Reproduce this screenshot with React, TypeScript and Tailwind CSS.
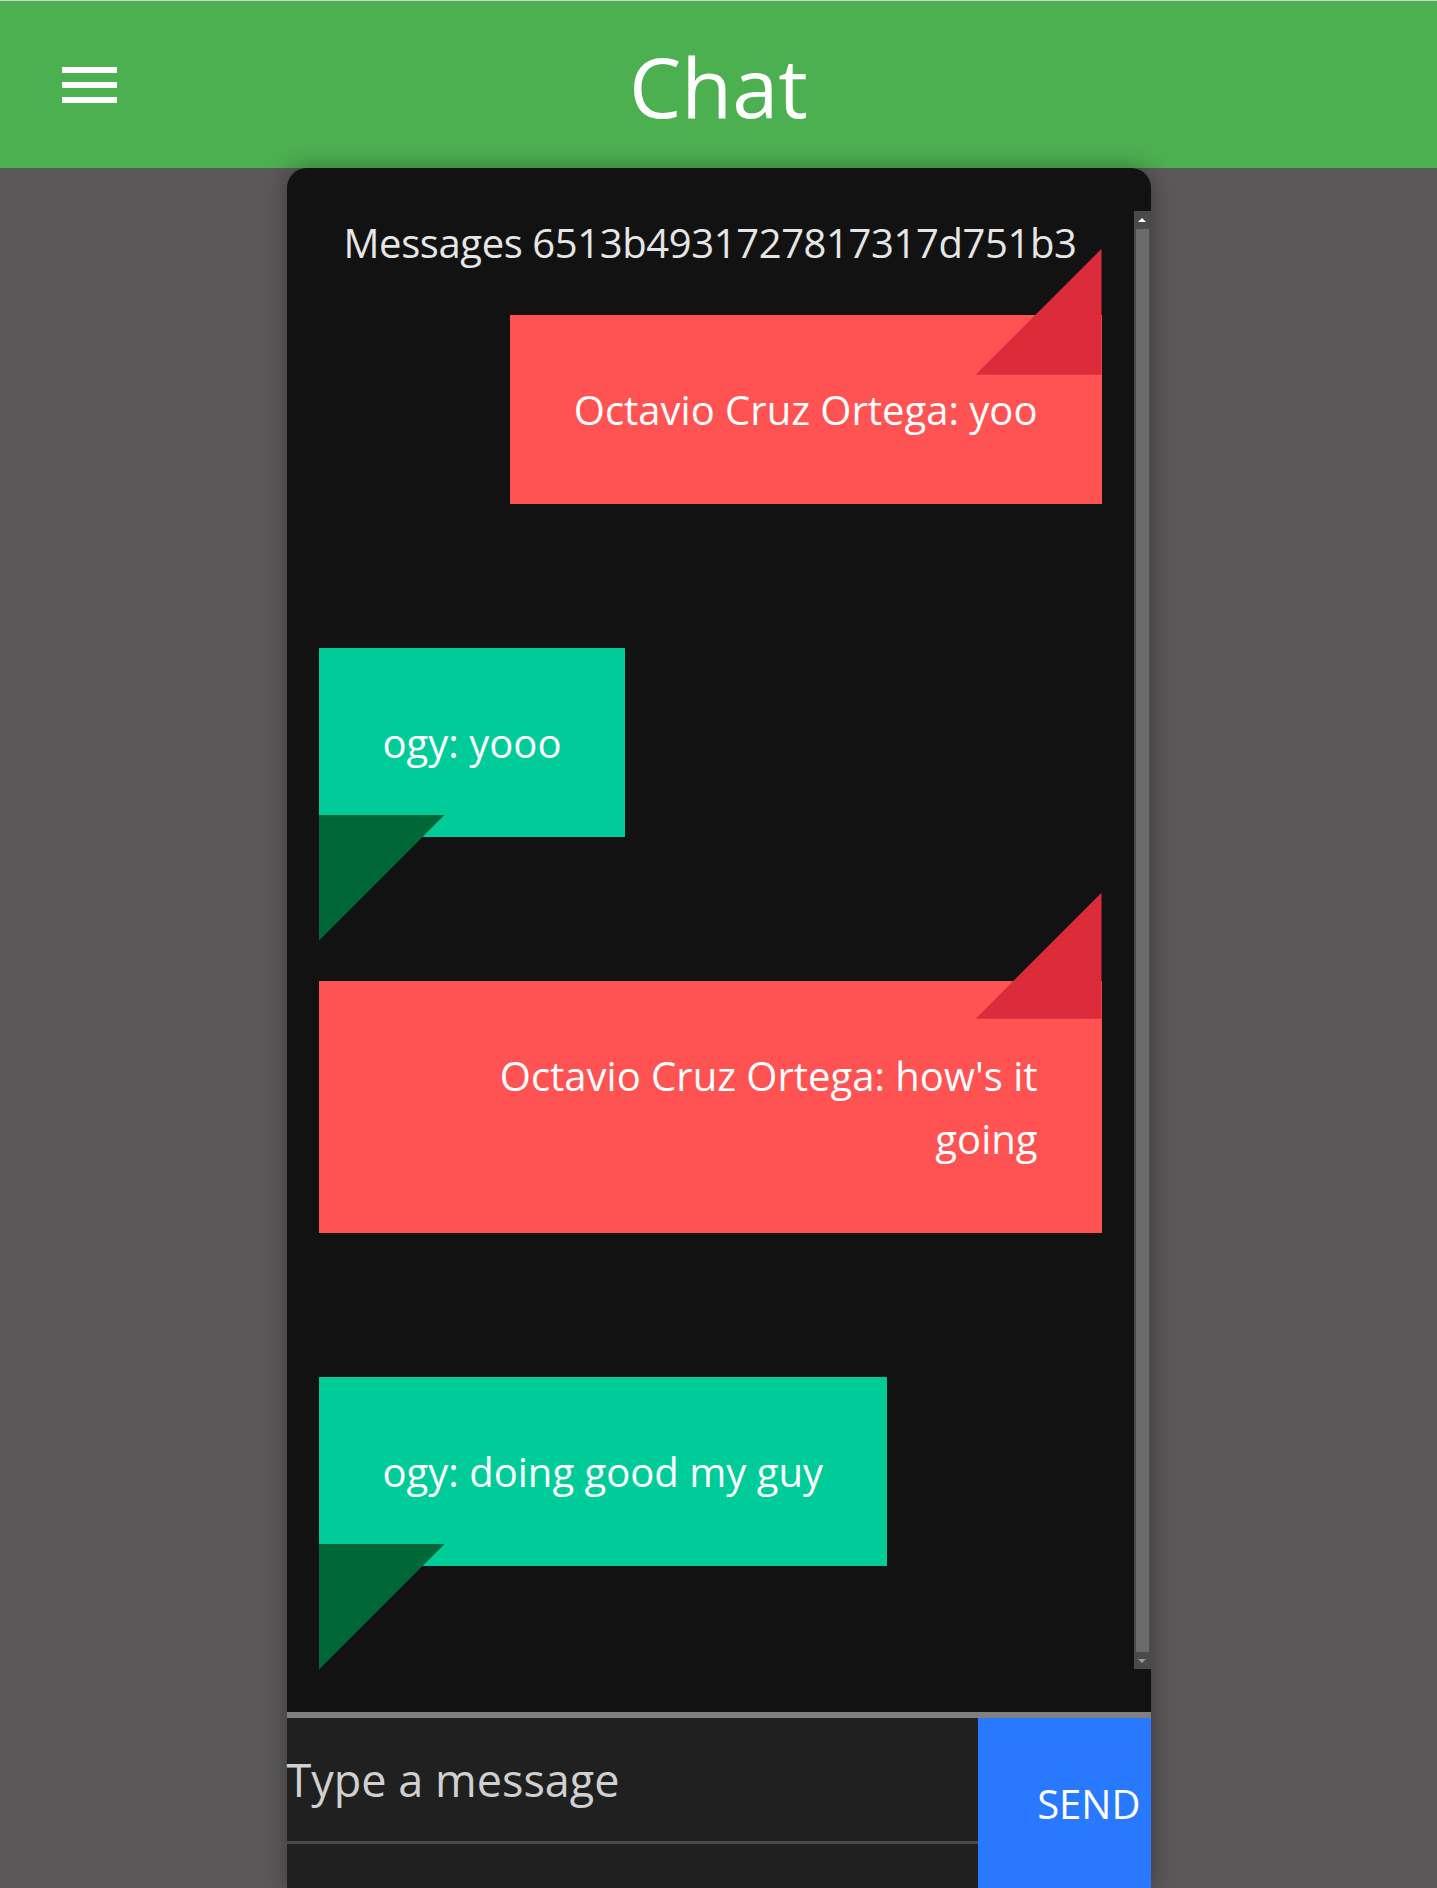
import React from "react";

type Msg = { side: "me" | "them"; lines: string[] };

const messages: Msg[] = [
  { side: "me", lines: ["Octavio Cruz Ortega: yoo"] },
  { side: "them", lines: ["ogy: yooo"] },
  { side: "me", lines: ["Octavio Cruz Ortega: how's it", "going"] },
  { side: "them", lines: ["ogy: doing good my guy"] },
];

function Text({ lines }: { lines: string[] }) {
  return (
    <span>
      {lines.map((l, i) => (
        <React.Fragment key={i}>
          {i > 0 && <br />}
          {l}
        </React.Fragment>
      ))}
    </span>
  );
}

function Bubble({ m }: { m: Msg }) {
  const wide = m.lines.length > 1;
  if (m.side === "me") {
    return (
      <div
        className={
          "relative max-w-[784px] bg-[#ff5252] px-16 py-[63px] text-right text-[40px] leading-[63px] text-white " +
          (wide ? "self-stretch" : "self-end")
        }
      >
        <Text lines={m.lines} />
        <div className="absolute right-0 top-[-35%] h-[126px] w-[126px] bg-[#dc2b3b] [clip-path:polygon(100%_0,100%_100%,0_100%)]" />
      </div>
    );
  }
  return (
    <div
      className={
        "relative max-w-[784px] bg-[#00cc99] px-16 py-[63px] text-left text-[40px] leading-[63px] text-white " +
        (wide ? "self-stretch" : "self-start")
      }
    >
      <Text lines={m.lines} />
      <div className="absolute left-0 bottom-[-55%] h-[126px] w-[126px] bg-[#006837] [clip-path:polygon(0_0,100%_0,0_100%)]" />
    </div>
  );
}

export default function App() {
  return (
    <div className="min-h-screen bg-[#5a5858] font-['Open_Sans',_'Noto_Sans',_sans-serif]">
      <header className="relative flex h-[168px] items-center justify-center border-t border-[#cfcfcf] bg-[#4caf50]">
        <button className="absolute left-[62px] top-[66px] flex w-[55px] flex-col gap-[9px]">
          <span className="block h-[6px] w-full bg-white" />
          <span className="block h-[6px] w-full bg-white" />
          <span className="block h-[6px] w-full bg-white" />
        </button>
        <h1 className="mt-[2px] text-[83px] font-normal leading-none text-white">Chat</h1>
      </header>
      <main className="relative z-10 mx-auto w-[864px] rounded-t-[20px] bg-[#121212] pt-[43px] shadow-[0_0_22px_rgba(0,0,0,0.35)]">
        <div className="flex">
          <div className="flex flex-1 flex-col px-8 pb-[103px]">
            <h2 className="whitespace-nowrap text-center text-[40px] font-normal leading-[63px] tracking-[-0.4px] text-[#e6e6e6]">
              Messages 6513b4931727817317d751b3
            </h2>
            <div className="mt-[41px] flex flex-col gap-[144px]">
              {messages.map((m, i) => (
                <Bubble key={i} m={m} />
              ))}
            </div>
          </div>
          <div className="flex w-[17px] flex-col bg-[#4a4a4a]">
            <div className="flex h-[18px] items-center justify-center">
              <div className="h-0 w-0 border-x-[4px] border-b-[4px] border-x-transparent border-b-white" />
            </div>
            <div className="mx-[2px] flex-1 bg-[#6b6b6b]" />
            <div className="flex h-[17px] items-center justify-center">
              <div className="h-0 w-0 border-x-[4px] border-t-[4px] border-x-transparent border-t-[#9a9a9a]" />
            </div>
          </div>
        </div>
        <div className="h-[43px]" />
        <div className="h-[6px] bg-[#808080]" />
        <div className="flex h-[172px]">
          <div className="flex-1 bg-[#202020]">
            <div className="flex h-[126px] items-center border-b-[3px] border-[#4a4a4a]">
              <span className="text-[45px] leading-none text-[#d0d0d0]">Type a message</span>
            </div>
          </div>
          <button className="flex w-[173px] items-center justify-end bg-[#2979ff] pr-[10px] text-[40px] text-white">
            SEND
          </button>
        </div>
      </main>
    </div>
  );
}
